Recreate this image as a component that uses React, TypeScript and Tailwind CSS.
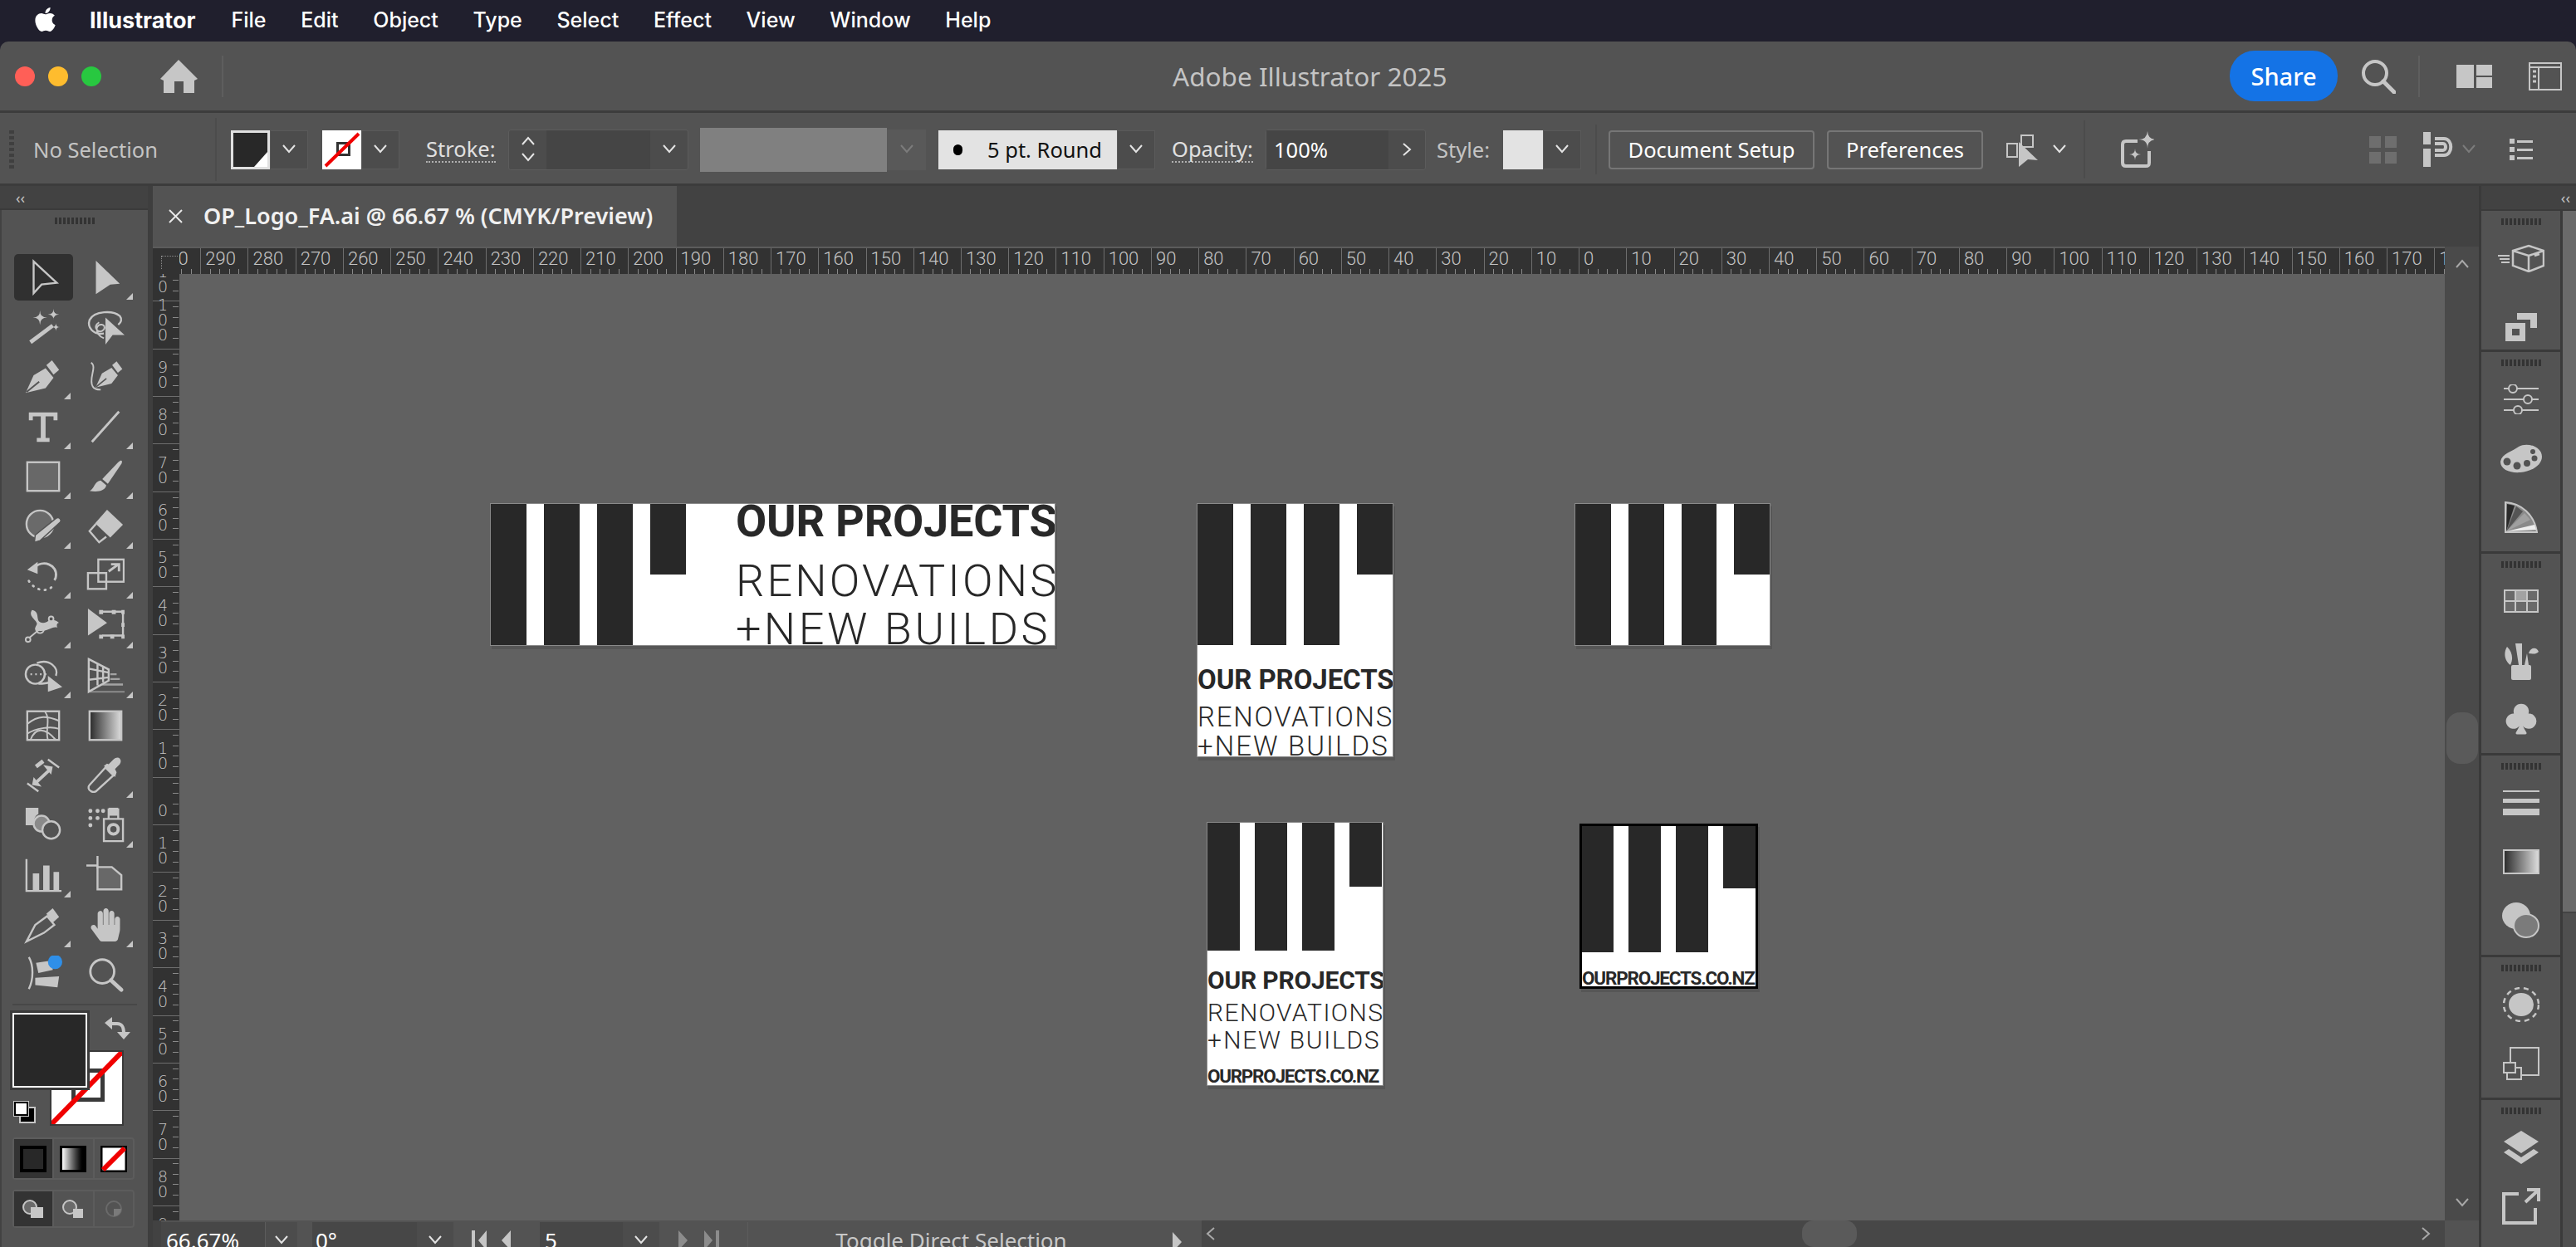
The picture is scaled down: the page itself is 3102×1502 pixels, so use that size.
import type { ReactNode } from 'react'
import { FaApple, FaHandPaper } from 'react-icons/fa'
import { BsSuitClubFill } from 'react-icons/bs'

const C = '#c6c6c6'
const BG = '#535353'

const star = (x: number, y: number, r: number) =>
  `M${x} ${y - r}Q${x} ${y} ${x + r} ${y}Q${x} ${y} ${x} ${y + r}Q${x} ${y} ${x - r} ${y}Q${x} ${y} ${x} ${y - r}Z`

function Ico({ children, size = 48 }: { children: ReactNode; size?: number }) {
  return (
    <svg width={size} height={size} viewBox="0 0 48 48" fill="none" stroke="none">
      {children}
    </svg>
  )
}

const nib = (
  <>
    <path d="M2 44 12 22 27 13 37 25 27 38Z" fill={C} />
    <path d="M28 9 35 3 44 15 37 21Z" fill={C} />
    <path d="M3 43 19 30" stroke={BG} strokeWidth="2" />
  </>
)

const tools: { icon: ReactNode; tri?: boolean }[] = [
  { icon: <path d="M12 4 41 31 22 33 12 44Z" stroke={C} strokeWidth="2.5" /> },
  { icon: <path d="M12 3 42 32 30 33 12 45Z" fill={C} />, tri: true },
  { icon: <><path d="M8 43 36 22" stroke={C} strokeWidth="5" /><path d={star(20, 12, 9)} fill={C} /><path d={star(37, 8, 7)} fill={C} /><path d={star(40, 24, 5)} fill={C} /></> },
  { icon: <><path d="M22 32C8 34 1 24 4 15 10 3 34 3 42 10 45 14 44 18 40 21" stroke={C} strokeWidth="2.5" /><path d="M16 18C6 24 16 34 22 27 26 20 14 18 13 26 13 32 17 36 22 38" stroke={C} strokeWidth="2" /><path d="M24 12 48 34 33 34 24 46Z" fill={C} /></> },
  { icon: nib, tri: true },
  { icon: <><g transform="translate(10 2) scale(.8)">{nib}</g><path d="M6 6C14 12 2 26 8 36 10 40 14 40 18 40" stroke={C} strokeWidth="2" /></> },
  { icon: <path d="M6 6H42V16H37V11H27V38H32V43H16V38H21V11H11V16H6Z" fill={C} />, tri: true },
  { icon: <path d="M7 43 41 5" stroke={C} strokeWidth="3" />, tri: true },
  { icon: <rect x="4" y="6" width="40" height="36" fill="#686868" stroke={C} strokeWidth="2.5" />, tri: true },
  { icon: <><path d="M4 42C10 40 10 30 18 29L25 35C24 42 14 44 4 42Z" fill={C} /><path d="M20 27 40 6C44 2 46 4 44 8L27 33Z" fill={C} /></>, tri: true },
  { icon: <><circle cx="20" cy="21" r="17" fill="#6a6a6a" stroke={C} strokeWidth="2.5" /><path d="M14 35 40 14C44 11 48 16 45 19L20 42 13 44Z" fill={C} stroke={BG} strokeWidth="1.5" /></>, tri: true },
  { icon: <><path d="M26 3 46 22 30 38 11 20Z" fill={C} /><path d="M12 21 4 30 16 44 25 37" stroke={C} strokeWidth="2.5" /></>, tri: true },
  { icon: <><path d="M12 14C24 2 42 10 40 24 40 26 39 28 38 29" stroke={C} strokeWidth="3" /><path d="M4 16 17 6 17 21Z" fill={C} /><path d="M6 30C14 43 32 46 38 33" stroke={C} strokeWidth="3" strokeDasharray="1 7" strokeLinecap="round" /></>, tri: true },
  { icon: <><rect x="15" y="3" width="32" height="28" stroke={C} strokeWidth="2.5" /><rect x="2" y="20" width="23" height="20" stroke={C} strokeWidth="2.5" /><path d="M28 18 39 10M31 9H41V18" stroke={C} strokeWidth="3" /></>, tri: true },
  { icon: <><path d="M10 4C22 6 12 20 24 20 32 20 34 12 44 20 42 20 40 22 42 26 34 24 30 32 18 30 12 30 14 26 16 22 18 18 4 12 10 4Z" fill={C} /><path d="M4 41 34 16" stroke={C} strokeWidth="2" /><circle cx="5" cy="41" r="3" fill={BG} stroke={C} strokeWidth="2" /><circle cx="34" cy="15" r="3" fill={BG} stroke={C} strokeWidth="2" /><circle cx="20" cy="28" r="5" stroke={C} strokeWidth="2" /></>, tri: true },
  { icon: <><path d="M2 2 26 20 2 36Z" fill={C} /><path d="M20 6H46V36H20" stroke={C} strokeWidth="2.5" /><path d="M16 4h5v5h-5zM32 4h5v5h-5zM44 4h4v5h-4zM44 20h4v5h-4zM44 35h4v5h-4zM30 35h5v5h-5zM16 35h5v5h-5z" fill={C} /></>, tri: true },
  { icon: <><ellipse cx="14" cy="22" rx="12" ry="12" stroke={C} strokeWidth="2.5" /><path d="M16 8C32 2 44 14 40 24M18 34C24 34 28 34 32 32" stroke={C} strokeWidth="2.5" /><path d="M8 22h2M14 22h2M20 22h2M26 22h2" stroke={C} strokeWidth="2.5" /><path d="M30 24 48 38 30 44Z" fill={C} /></>, tri: true },
  { icon: <><path d="M3 3 28 16V30L3 44ZM3 15 28 20M3 29 28 26M14 8V36M21 12V32" stroke={C} strokeWidth="2.5" /><path d="M30 22H38M30 28H42M20 35H46" stroke={C} strokeWidth="2.5" opacity=".7" /><path d="M4 44H48" stroke={C} strokeWidth="2" opacity=".5" /></>, tri: true },
  { icon: <><rect x="4" y="6" width="40" height="36" stroke={C} strokeWidth="2.5" /><path d="M4 22C18 10 30 12 44 18M8 42C14 26 26 26 40 42M26 6C34 16 26 30 30 42M4 34C14 28 32 24 44 28" stroke={C} strokeWidth="2" /></> },
  { icon: <rect x="4" y="6" width="40" height="36" fill="url(#gr)" stroke={C} strokeWidth="2.5" /> },
  { icon: <><path d="M4 34 18 44M30 4 44 14" stroke={C} strokeWidth="2.5" /><path d="M15 33 32 17" stroke={C} strokeWidth="4" /><path d="M10 36 22 38 12 26ZM36 13 24 11 34 23Z" fill={C} /><path d="M15 13 24 6" stroke={C} strokeWidth="5" /></> },
  { icon: <><path d="M6 44C2 42 2 38 4 36L24 14 34 24 12 44C10 45 8 45 6 44Z" stroke={C} strokeWidth="2.5" /><path d="M22 12 36 26 38 20 36 16 42 10C46 4 40 -2 34 4L28 10 26 9Z" fill={C} /></>, tri: true },
  { icon: <><path d="M2 2H18V10C14 12 12 16 12 24H2Z" fill={C} /><circle cx="22" cy="22" r="10" fill="#8a8a8a" stroke={C} strokeWidth="2.5" /><circle cx="34" cy="30" r="11" fill={BG} stroke={C} strokeWidth="2.5" /></> },
  { icon: <><path d="M5 6h.1M14 6h.1M21 6h.1M5 15h.1M5 24h.1M14 15h.1" stroke={C} strokeWidth="5" strokeLinecap="round" /><path d="M22 16H46V44H22ZM28 4H40V16H28Z" stroke={C} strokeWidth="2.5" /><rect x="28" y="2" width="12" height="10" fill={C} /><ellipse cx="34" cy="29" rx="6" ry="6" stroke={C} strokeWidth="4" /></>, tri: true },
  { icon: <><path d="M3 4V44H47" stroke={C} strokeWidth="2.5" /><path d="M11 44V22H19V44ZM24 44V12H32V44ZM37 44V20H44V44Z" fill={C} /></>, tri: true },
  { icon: <><path d="M14 0V16M0 12H14" stroke={C} strokeWidth="2.5" /><path d="M14 14H32L44 24V42H14Z" fill="#686868" stroke={C} strokeWidth="2.5" /></> },
  { icon: <><path d="M3 45 14 24 29 13 38 24 25 34Z" stroke={C} strokeWidth="2.5" /><path d="M28 10 36 3 44 14 36 21Z" fill={C} /></>, tri: true },
  { icon: <div />, tri: true },
  { icon: <><path d="M6 2C12 12 12 30 6 42" stroke={C} strokeWidth="2.5" /><path d="M15 9 36 6 36 18 18 22ZM14 28 44 26 42 40 14 37Z" fill={C} /><ellipse cx="39" cy="8" rx="9" ry="9" fill="#2f8fe8" /></> },
  { icon: <><circle cx="20" cy="20" r="15" stroke={C} strokeWidth="3" /><path d="M31 31 44 43" stroke={C} strokeWidth="5" strokeLinecap="round" /></> },
]

function Grip({ n = 10, className = '' }: { n?: number; className?: string }) {
  return (
    <div className={`flex gap-[2px] ${className}`}>
      {Array.from({ length: n }).map((_, i) => (
        <span key={i} className="block w-[3px] h-[8px] bg-[#333333]" />
      ))}
    </div>
  )
}

function Chev({ dir = 'down', className = 'text-[#e4e4e4]' }: { dir?: 'down' | 'up' | 'right' | 'left'; className?: string }) {
  const d = { down: 'M2 3 9 11 16 3', up: 'M2 11 9 3 16 11', right: 'M5 1 13 8 5 15', left: 'M13 1 5 8 13 15' }[dir]
  return (
    <svg width="18" height="16" viewBox="0 0 18 16" fill="none" stroke="currentColor" strokeWidth="2" className={className}>
      <path d={d} />
    </svg>
  )
}

function ChevBox({ w = 'w-[46px]', dim = false, children }: { w?: string; dim?: boolean; children?: ReactNode }) {
  return (
    <div className={`${w} h-full flex items-center justify-center bg-[#4c4c4c] border border-[#5a5a5a]`}>
      {children ?? <Chev className={dim ? 'text-[#777777]' : 'text-[#e4e4e4]'} />}
    </div>
  )
}

function Ruler() {
  const vals = [300, 290, 280, 270, 260, 250, 240, 230, 220, 210, 200, 190, 180, 170, 160, 150, 140, 130, 120, 110, 100, 90, 80, 70, 60, 50, 40, 30, 20, 10, 0, 10, 20, 30, 40, 50, 60, 70, 80, 90, 100, 110, 120, 130, 140, 150, 160, 170, 180]
  return (
    <div className="h-[33px] flex bg-[#323232] border-t-[2px] border-[#5c5c5c] overflow-hidden">
      <div className="w-[32px] shrink-0 h-full z-10 bg-[#323232] flex items-end justify-end pb-[6px] pr-[2px]">
        <div className="w-[20px] h-[16px] border-l border-t border-dotted border-[#8c8c8c]" />
      </div>
      <div className="flex ml-[-32px] shrink-0">
        {vals.map((v, i) => (
          <div key={i} className="w-[57.24px] shrink-0 h-full border-l border-[#6e6e6e] flex flex-col justify-between">
            <div className="pl-[5px] pt-[2px] text-[22px] leading-[22px] font-light text-[#c4c4c4] font-['Roboto',sans-serif]">{v}</div>
            <div className="flex h-[6px] w-full">
              <span className="flex-1" />
              <span className="flex-1 border-l border-[#8a8a8a]" />
              <span className="flex-1 border-l border-[#8a8a8a]" />
              <span className="flex-1 border-l border-[#8a8a8a]" />
              <span className="flex-1 border-l border-[#8a8a8a]" />
            </div>
          </div>
        ))}
      </div>
    </div>
  )
}

function VRuler() {
  const vals = [110, 100, 90, 80, 70, 60, 50, 40, 30, 20, 10, 0, 10, 20, 30, 40, 50, 60, 70, 80, 90]
  return (
    <div className="w-[32px] shrink-0 bg-[#323232] overflow-hidden h-full">
      <div className="mt-[-25px]">
        {vals.map((v, i) => (
          <div key={i} className="h-[57.35px] border-t border-[#6e6e6e] flex justify-between">
            <div className="flex-1 flex flex-col justify-end items-center pb-[8px] text-[19px] leading-[18px] text-[#c4c4c4] font-['DejaVu_Sans',sans-serif] font-extralight">
              {String(v).split('').map((d, k) => (
                <span key={k} className="block">{d}</span>
              ))}
            </div>
            <div className="w-[7px] flex flex-col justify-around pb-[6px] mr-[1px]">
              <span className="block h-[1px] bg-[#8a8a8a]" />
              <span className="block h-[1px] bg-[#8a8a8a]" />
              <span className="block h-[1px] bg-[#8a8a8a]" />
              <span className="block h-[1px] bg-[#8a8a8a]" />
            </div>
          </div>
        ))}
      </div>
    </div>
  )
}

const bold = "font-['Roboto',sans-serif] font-bold text-[#282828] whitespace-nowrap"
const light = "font-['Roboto',sans-serif] font-light text-[#282828] whitespace-nowrap"
const bar = 'bg-[#282828]'

function Canvas() {
  return (
    <div className="flex-1 relative bg-[#616161] overflow-hidden">
      {/* logo artboards sit at free positions on the canvas */}
      <div className="absolute left-[374px] top-[276px] w-[681px] h-[172px] bg-white flex border border-[#8a8a8a] shadow-[2px_4px_0_#565656] overflow-hidden">
        <div className="flex gap-[21px] h-full w-[295px] shrink-0">
          <div className={`w-[43px] h-full ${bar}`} />
          <div className={`w-[43px] h-full ${bar}`} />
          <div className={`w-[43px] h-full ${bar}`} />
          <div className={`w-[43px] h-[85px] ${bar}`} />
        </div>
        <div className="w-[384px] flex-col flex">
          <div className={`${bold} text-[54px] leading-[40px] tracking-[-0.2px] mt-[1px]`}>OUR PROJECTS</div>
          <div className={`${light} text-[54px] leading-[40px] tracking-[3.15px] mt-[32px]`}>RENOVATIONS</div>
          <div className={`${light} text-[54px] leading-[40px] tracking-[3.6px] mt-[18px]`}><span className="tracking-[-5px]">+ </span>NEW BUILDS</div>
        </div>
      </div>

      <div className="absolute left-[1225px] top-[276px] w-[237px] h-[306px] bg-white flex flex-col border border-[#8a8a8a] shadow-[2px_4px_0_#565656] overflow-hidden">
        <div className="flex gap-[21px] h-[170px] shrink-0">
          <div className={`w-[43px] h-full ${bar}`} />
          <div className={`w-[43px] h-full ${bar}`} />
          <div className={`w-[43px] h-full ${bar}`} />
          <div className={`w-[43px] h-[85px] ${bar}`} />
        </div>
        <div className={`${bold} text-[33px] leading-[24px] tracking-[-0.1px] mt-[30px]`}>OUR PROJECTS</div>
        <div className={`${light} text-[33px] leading-[24px] tracking-[1.75px] mt-[21px]`}>RENOVATIONS</div>
        <div className={`${light} text-[33px] leading-[24px] tracking-[2.1px] mt-[11px]`}><span className="tracking-[-3px]">+ </span>NEW BUILDS</div>
      </div>

      <div className="absolute left-[1680px] top-[276px] w-[236px] h-[172px] bg-white flex gap-[21px] border border-[#8a8a8a] shadow-[2px_4px_0_#565656] overflow-hidden">
        <div className={`w-[43px] h-full ${bar}`} />
        <div className={`w-[43px] h-full ${bar}`} />
        <div className={`w-[43px] h-full ${bar}`} />
        <div className={`w-[43px] h-[85px] ${bar}`} />
      </div>

      <div className="absolute left-[1237px] top-[660px] w-[213px] h-[318px] bg-white flex flex-col border border-[#8a8a8a] shadow-[2px_4px_0_#565656] overflow-hidden">
        <div className="flex gap-[18px] h-[154px] shrink-0">
          <div className={`w-[39px] h-full ${bar}`} />
          <div className={`w-[39px] h-full ${bar}`} />
          <div className={`w-[39px] h-full ${bar}`} />
          <div className={`w-[39px] h-[77px] ${bar}`} />
        </div>
        <div className={`${bold} text-[30px] leading-[22px] tracking-[-0.2px] mt-[25px]`}>OUR PROJECTS</div>
        <div className={`${light} text-[30px] leading-[22px] tracking-[1.4px] mt-[17px]`}>RENOVATIONS</div>
        <div className={`${light} text-[30px] leading-[22px] tracking-[1.7px] mt-[11px]`}><span className="tracking-[-2.5px]">+ </span>NEW BUILDS</div>
        <div className={`${bold} text-[22.5px] leading-[18px] tracking-[-1.3px] mt-[23px]`}>OURPROJECTS.CO.NZ</div>
      </div>

      <div className="absolute left-[1686px] top-[662px] w-[215px] h-[199px] bg-white flex flex-col border-[3px] border-black shadow-[2px_4px_0_#565656] overflow-hidden">
        <div className="flex gap-[18.5px] h-[152px] shrink-0 ml-[-1px]">
          <div className={`w-[39px] h-full ${bar}`} />
          <div className={`w-[39px] h-full ${bar}`} />
          <div className={`w-[39px] h-full ${bar}`} />
          <div className={`w-[39px] h-[75px] ${bar}`} />
        </div>
        <div className={`${bold} text-[22.5px] leading-[18px] tracking-[-1.2px] mt-[22px]`}>OURPROJECTS.CO.NZ</div>
      </div>
    </div>
  )
}

function Tri() {
  return <span className="absolute right-[5px] bottom-[3px] w-0 h-0 border-l-[8px] border-l-transparent border-b-[8px] border-b-[#c6c6c6]" />
}

function LeftPanel() {
  return (
    <div className="w-[184px] shrink-0 flex flex-col bg-[#424242] border-r-[6px] border-[#3e3e3e] h-full">
      <div className="h-[29px] shrink-0 flex items-center pl-[19px] text-[#c4c4c4] text-[18px] leading-none font-['Noto_Sans',sans-serif] border-b-[2px] border-[#3a3a3a]">‹‹</div>
      <div className="flex-1 bg-[#535353] ml-[2px] flex flex-col">
        <Grip className="justify-center mt-[9px] ml-[-1px] h-[8px]" />
        <div className="grid grid-cols-[75.5px_75.5px] auto-rows-[60px] ml-[12px] mt-[34px]">
          {tools.map((t, i) => (
            <div key={i} className={`relative flex items-center justify-center ${i === 0 ? 'rounded-[5px] bg-[#303030] ml-[3px] mr-[2px] my-[2px]' : ''}`}>
              {i === 27 ? <FaHandPaper size={40} color={C} /> : <Ico size={46}>{t.icon}</Ico>}
              {t.tri && <Tri />}
            </div>
          ))}
        </div>
        <div className="mx-[13px] mt-[5px] h-[2px] bg-[#474747]" />
        <div className="relative h-[150px] mt-[9px] ml-[13px]">
          <div className="absolute left-[45px] top-[45px] w-[89px] h-[91px] bg-white border-[2px] border-[#3a3a3a] overflow-hidden">
            <div className="absolute left-[24px] top-[20px] w-[40px] h-[40px] border-[5px] border-[#3a3a3a]" />
            <svg className="absolute inset-0" width="85" height="87" viewBox="0 0 85 87"><path d="M0 87 85 0" stroke="#f00000" strokeWidth="6" /></svg>
          </div>
          <div className="absolute left-0 top-0 w-[90px] h-[90px] bg-[#282828] border-[2px] border-white outline-[3px] outline-[#3a3a3a]" />
          <svg className="absolute left-[110px] top-[3px]" width="32" height="30" viewBox="0 0 32 30" fill="none">
            <path d="M5 10H16C22 10 24 14 24 22" stroke={C} strokeWidth="4" />
            <path d="M1 9 10 2V17ZM24 29 16 20H32Z" fill={C} />
          </svg>
          <div className="absolute left-0 top-[105px] w-[30px] h-[30px]">
            <div className="absolute left-[8px] top-[8px] w-[20px] h-[20px] bg-black border-[2px] border-[#c6c6c6]" />
            <div className="absolute left-[2px] top-[2px] w-[17px] h-[17px] bg-white border-[2px] border-black outline-[1px] outline-[#c6c6c6]" />
          </div>
        </div>
        <div className="ml-[13px] w-[147px] h-[51px] flex border-[2px] border-[#5c5c5c] rounded-[4px]">
          <div className="flex-1 bg-[#333333] flex items-center justify-center"><div className="w-[32px] h-[32px] bg-[#282828] border-[4px] border-black" /></div>
          <div className="flex-1 border-l-[2px] border-[#5c5c5c] flex items-center justify-center"><div className="w-[32px] h-[32px] bg-gradient-to-r from-white to-black border-[3px] border-black" /></div>
          <div className="flex-1 border-l-[2px] border-[#5c5c5c] flex items-center justify-center">
            <svg width="32" height="32" viewBox="0 0 32 32"><rect width="32" height="32" fill="#fff" stroke="#000" strokeWidth="5" /><path d="M3 29 29 3" stroke="#f00000" strokeWidth="6" /></svg>
          </div>
        </div>
        <div className="ml-[13px] mt-[12px] w-[147px] h-[46px] flex border-[2px] border-[#5c5c5c] rounded-[4px]">
          <div className="flex-1 bg-[#333333] flex items-center justify-center">
            <svg width="28" height="24" viewBox="0 0 28 24" fill="none"><circle cx="10" cy="10" r="8" stroke={C} strokeWidth="2" fill="#6a6a6a" /><rect x="11" y="10" width="15" height="13" fill={C} /></svg>
          </div>
          <div className="flex-1 border-l-[2px] border-[#5c5c5c] flex items-center justify-center">
            <svg width="28" height="24" viewBox="0 0 28 24" fill="none"><circle cx="10" cy="10" r="8" stroke={C} strokeWidth="2" fill="#6a6a6a" /><rect x="14" y="12" width="12" height="11" fill={C} /></svg>
          </div>
          <div className="flex-1 border-l-[2px] border-[#5c5c5c] flex items-center justify-center">
            <svg width="24" height="22" viewBox="0 0 24 22" fill="none"><circle cx="12" cy="11" r="9" stroke="#6a6a6a" strokeWidth="2" /><path d="M12 11H21C21 16 17 20 12 20Z" fill="#7a7a7a" /></svg>
          </div>
        </div>
      </div>
    </div>
  )
}

function RightSection({ h, items, last }: { h: string; items: ReactNode[]; last?: boolean }) {
  return (
    <div className={`${h} shrink-0 flex flex-col items-center pt-[9px] ${last ? '' : 'border-b-[3px] border-[#3a3a3a]'}`}>
      <Grip />
      <div className="mt-[4px] flex flex-col items-center w-full">
        {items.map((x, i) => (
          <div key={i} className="h-[71px] w-full flex items-center justify-center">{x}</div>
        ))}
      </div>
    </div>
  )
}

function RightPanel() {
  const s = C
  return (
    <div className="w-[118px] shrink-0 flex flex-col h-full bg-[#3a3a3a] pl-[3px]">
      <div className="h-[30px] shrink-0 bg-[#424242] flex items-center justify-end pr-[8px] text-[#c4c4c4] text-[18px] leading-none border-b-[2px] border-[#3a3a3a] font-['Noto_Sans',sans-serif]">‹‹</div>
      <div className="flex-1 flex">
        <div className="w-[95px] shrink-0 bg-[#535353] flex flex-col">
          <RightSection h="h-[170px]" items={[
            <svg key="a" width="56" height="34" viewBox="0 0 56 34" fill="none"><path d="M0 14H14M2 18H14M4 22H14" stroke={s} strokeWidth="2" /><path d="M18 8 37 2 55 8V26L37 33 18 26ZM18 8 37 14 55 8M37 14V33M44 14 50 12" stroke={s} strokeWidth="2.5" /></svg>,
            <div key="b" className="mt-[24px]"><svg width="38" height="34" viewBox="0 0 38 34"><path d="M14 0H38V18H30V8H14Z" fill={s} /><path d="M0 12H24V34H0ZM8 19V27H17V19Z" fill={s} fillRule="evenodd" /></svg></div>,
          ]} />
          <RightSection h="h-[243px]" items={[
            <svg key="a" width="42" height="36" viewBox="0 0 42 36" fill="none" stroke={s} strokeWidth="2"><path d="M0 5H42M0 18H42M0 31H42" /><circle cx="11" cy="5" r="5" fill={BG} /><circle cx="29" cy="18" r="5" fill={BG} /><circle cx="17" cy="31" r="5" fill={BG} /></svg>,
            <svg key="b" width="50" height="36" viewBox="0 0 50 36"><path d="M0 22C2 12 14 10 22 4 32 -2 50 4 50 16 50 26 38 34 24 35 12 36 0 32 0 22Z" fill={s} /><circle cx="8" cy="22" r="4.5" fill={BG} /><circle cx="20" cy="27" r="4.5" fill={BG} /><circle cx="32" cy="24" r="4" fill={BG} /><circle cx="41" cy="18" r="3.5" fill={BG} /><circle cx="39" cy="10" r="3" fill={BG} /></svg>,
            <svg key="c" width="40" height="38" viewBox="0 0 40 38"><path d="M1 1C20 2 36 16 39 37H1Z" fill="#8a8a8a" stroke={s} strokeWidth="2" /><path d="M2 36 3 3 12 5Z" fill="#2a2a2a" /><path d="M2 36 14 6 22 12Z" fill="#555" /><path d="M2 36 24 14 31 22Z" fill="#a0a0a0" /><path d="M2 36 38 34 36 28Z" fill="#eee" /></svg>,
          ]} />
          <RightSection h="h-[243px]" items={[
            <svg key="a" width="42" height="28" viewBox="0 0 42 28"><rect x="1" y="1" width="40" height="26" fill="#6a6a6a" stroke={s} strokeWidth="2" /><rect x="15" y="2" width="13" height="11" fill="#a2a2a2" /><path d="M14 1V27M28 1V27M1 14H41" stroke={s} strokeWidth="2" /></svg>,
            <svg key="b" width="42" height="48" viewBox="0 0 42 48"><rect x="9" y="30" width="24" height="18" rx="2" fill={s} /><path d="M18 30 14 4H22L22 30ZM25 30 28 16 30 30Z" fill={s} /><path d="M8 30C0 24 0 14 4 8 10 14 12 22 8 30ZM30 16C32 8 40 8 42 14 38 18 34 16 30 16Z" fill={s} /></svg>,
            <BsSuitClubFill key="c" size={42} color={s} />,
          ]} />
          <RightSection h="h-[243px]" items={[
            <svg key="a" width="44" height="30" viewBox="0 0 44 30" fill={s}><rect width="44" height="2" /><rect y="10" width="44" height="5" /><rect y="22" width="44" height="8" /></svg>,
            <svg key="b" width="44" height="30" viewBox="0 0 44 30"><rect x="1" y="1" width="42" height="28" fill="url(#gr)" stroke={s} strokeWidth="2" /></svg>,
            <svg key="c" width="46" height="44" viewBox="0 0 46 44"><ellipse cx="17" cy="16" rx="17" ry="16" fill={s} /><ellipse cx="29" cy="28" rx="15" ry="14" fill="#7b7b7b" stroke={s} strokeWidth="2" /></svg>,
          ]} />
          <RightSection h="h-[172px]" items={[
            <svg key="a" width="44" height="42" viewBox="0 0 44 42"><ellipse cx="22" cy="21" rx="21" ry="20" fill="none" stroke={s} strokeWidth="2.5" strokeDasharray="6 5" /><ellipse cx="22" cy="21" rx="15" ry="14" fill={s} /></svg>,
            <svg key="b" width="44" height="40" viewBox="0 0 44 40" fill="none" stroke={s} strokeWidth="2"><rect x="9" y="1" width="34" height="33" /><rect x="5" y="25" width="17" height="14" fill={BG} /><rect x="1" y="19" width="14" height="12" fill={BG} /></svg>,
          ]} />
          <RightSection h="flex-1" last items={[
            <svg key="a" width="42" height="40" viewBox="0 0 42 40" fill={s}><path d="M21 0 42 13 21 27 0 13Z" /><path d="M6 22 21 32 36 22 42 26 21 40 0 26Z" /></svg>,
            <svg key="b" width="46" height="44" viewBox="0 0 46 44" fill="none" stroke={s} strokeWidth="4"><path d="M20 7H2V42H40V24" /><path d="M28 17 43 3M30 2H44V16" /></svg>,
          ]} />
        </div>
        <div className="flex-1 ml-[3px] flex flex-col">
          <div className="h-[846px] bg-[#6a6a6a] border-b-[2px] border-[#444444]" />
          <div className="flex-1 bg-[#4f4f4f]" />
        </div>
      </div>
    </div>
  )
}

function StatusBar() {
  const f = "font-['Noto_Sans',sans-serif] text-[26px] leading-[44px] whitespace-nowrap"
  return (
    <div className="h-[32px] shrink-0 flex bg-[#535353] overflow-hidden">
      <div className="w-[10px] bg-[#424242]" />
      <div className="flex h-full w-[1253px] pt-[2px]">
        <div className={`w-[126px] bg-[#474747] border-r border-[#5c5c5c] pl-[6px] text-white ${f}`}>66.67%</div>
        <div className="w-[38px] bg-[#4c4c4c] flex justify-center pt-[14px]"><Chev /></div>
        <div className={`w-[126px] ml-[18px] bg-[#474747] pl-[4px] text-white ${f}`}>0°</div>
        <div className="w-[44px] bg-[#4c4c4c] flex justify-center pt-[14px]"><Chev /></div>
        <div className="w-[104px] flex items-start gap-[12px] pl-[22px] pt-[10px]">
          <svg width="22" height="24" viewBox="0 0 22 24" fill={C}><rect width="4" height="24" /><path d="M18 0V24L8 12Z" /></svg>
          <svg width="14" height="24" viewBox="0 0 14 24" fill={C}><path d="M13 0V24L2 12Z" /></svg>
        </div>
        <div className={`w-[100px] bg-[#474747] pl-[6px] text-white ${f}`}>5</div>
        <div className="w-[44px] bg-[#4c4c4c] flex justify-center pt-[14px]"><Chev /></div>
        <div className="w-[106px] flex items-start gap-[14px] pl-[22px] pt-[10px] opacity-50">
          <svg width="14" height="24" viewBox="0 0 14 24" fill={C}><path d="M1 0V24L12 12Z" /></svg>
          <svg width="22" height="24" viewBox="0 0 22 24" fill={C}><path d="M4 0V24L14 12Z" /><rect x="18" width="4" height="24" /></svg>
        </div>
        <div className={`w-[498px] border-l border-[#5c5c5c] pr-[8px] text-center text-[#c8c8c8] ${f}`}>Toggle Direct Selection</div>
        <div className="w-[47px] flex pt-[12px] pl-[13px]">
          <svg width="14" height="24" viewBox="0 0 14 24" fill={C}><path d="M1 0V24L12 12Z" /></svg>
        </div>
      </div>
      <div className="flex-1 bg-[#474747] flex items-center relative">
        <div className="ml-[2px]"><Chev dir="left" className="text-[#a8a8a8]" /></div>
        <div className="absolute left-[723px] top-[0px] w-[66px] h-[32px] rounded-[14px] bg-[#5a5a5a]" />
        <div className="ml-auto mr-[14px]"><Chev dir="right" className="text-[#a8a8a8]" /></div>
      </div>
      <div className="w-[41px] bg-[#535353]" />
    </div>
  )
}

export default function App() {
  const ui = "font-['Noto_Sans',sans-serif]"
  return (
    <div className="w-[3102px] h-[1502px] overflow-hidden bg-[#201f2d] flex flex-col">
      <svg width="0" height="0" className="absolute">
        <defs>
          <linearGradient id="gr"><stop offset="0" stopColor="#2a2a2a" /><stop offset="1" stopColor="#dddddd" /></linearGradient>
        </defs>
      </svg>

      {/* mac menu bar */}
      <div className="h-[50px] shrink-0 flex items-center bg-[#201f2d] pl-[38px] text-white text-[25px] font-['Inter',sans-serif]">
        <FaApple size={33} color="#fff" className="mt-[-4px]" />
        <div className="ml-[37px] font-bold text-[27px]">Illustrator</div>
        <div className="flex gap-[41.7px] ml-[43px] font-medium">
          {['File', 'Edit', 'Object', 'Type', 'Select', 'Effect', 'View', 'Window', 'Help'].map(m => (
            <span key={m}>{m}</span>
          ))}
        </div>
      </div>

      <div className="flex-1 flex flex-col min-h-0 rounded-t-[10px] overflow-hidden bg-[#535353]">
        {/* title bar */}
        <div className="h-[86px] shrink-0 flex items-center border-b-[3px] border-[#3c3c3c]">
          <div className="flex gap-[16px] ml-[18px]">
            <span className="block w-[24px] h-[24px] rounded-full bg-[#ff5f57]" />
            <span className="block w-[24px] h-[24px] rounded-full bg-[#febc2e]" />
            <span className="block w-[24px] h-[24px] rounded-full bg-[#28c840]" />
          </div>
          <svg className="ml-[71px]" width="45" height="40" viewBox="0 0 45 40" fill={C}>
            <path d="M22 0 45 23 41 25V40H28V26H17V40H4V25L0 23Z" />
          </svg>
          <div className="ml-[29px] w-[2px] h-[50px] bg-[#5e5e5e]" />
          <div className={`ml-[1143px] text-[#c4c4c4] text-[31.5px] leading-none ${ui}`}>Adobe Illustrator 2025</div>
          <div className={`ml-[auto] w-[130px] h-[61px] rounded-[30px] bg-[#1473e6] text-white text-[29px] font-medium flex items-center justify-center ${ui}`}>Share</div>
          <svg className="ml-[28px]" width="42" height="42" viewBox="0 0 42 42" fill="none" stroke={C} strokeWidth="4"><circle cx="17" cy="17" r="14" /><path d="M27 27 40 40" strokeLinecap="round" strokeWidth="5" /></svg>
          <div className="ml-[27px] w-[2px] h-[50px] bg-[#5e5e5e]" />
          <svg className="ml-[44px]" width="43" height="28" viewBox="0 0 43 28" fill={C}><rect width="21" height="28" /><rect x="24" width="19" height="13" /><rect x="24" y="15" width="19" height="13" /></svg>
          <svg className="ml-[44px] mr-[17px]" width="40" height="34" viewBox="0 0 40 34" fill="none" stroke={C} strokeWidth="2"><rect x="1" y="1" width="38" height="32" /><path d="M1 6H39M12 6V33" /><path d="M5 11h4M5 17h4M5 23h4" strokeWidth="3" /></svg>
        </div>

        {/* control bar */}
        <div className={`h-[88px] pt-[3px] shrink-0 flex items-center text-[25.5px] border-b-[3px] border-[#3c3c3c] ${ui}`}>
          <div className="w-[261px] h-[76px] shrink-0 flex items-center border-r-[2px] border-[#4c4c4c] pl-[11px]">
            <div className="grid grid-cols-1 gap-[3px]">
              {Array.from({ length: 7 }).map((_, i) => <span key={i} className="block w-[6px] h-[4px] bg-[#3f3f3f]" />)}
            </div>
            <span className="ml-[23px] text-[#c4c4c4] whitespace-nowrap">No Selection</span>
          </div>
          <div className="ml-[17px] w-[93px] h-[47px] flex shrink-0">
            <div className="w-[47px] h-full bg-[#282828] border-[3px] border-[#e0e0e0] relative overflow-hidden">
              <span className="absolute right-0 bottom-0 w-0 h-0 border-l-[16px] border-l-transparent border-b-[18px] border-b-white" />
            </div>
            <ChevBox />
          </div>
          <div className="ml-[17px] w-[93px] h-[47px] flex shrink-0">
            <div className="w-[47px] h-full bg-white relative">
              <span className="absolute left-[17px] top-[14px] w-[17px] h-[17px] border-[3px] border-[#333333]" />
              <svg className="absolute inset-0" width="47" height="47" viewBox="0 0 47 47"><path d="M4 43 44 4" stroke="#f00000" strokeWidth="4" /></svg>
            </div>
            <ChevBox />
          </div>
          <div className="ml-[32px] w-[84px] shrink-0 relative text-[#e0e0e0] leading-[30px] border-b-[2px] border-dotted border-[#b0b0b0] whitespace-nowrap">Stroke:</div>
          <div className="ml-[15px] w-[217px] h-[49px] flex shrink-0 border border-[#5c5c5c] rounded-[3px] bg-[#4c4c4c]">
            <div className="w-[45px] flex flex-col items-center justify-center gap-[3px]"><Chev dir="up" /><Chev /></div>
            <div className="flex-1 bg-[#454545]" />
            <div className="w-[45px] flex items-center justify-center"><Chev /></div>
          </div>
          <div className="ml-[14px] w-[225px] h-[53px] bg-[#808080] shrink-0" />
          <div className="w-[47px] h-[49px] shrink-0 bg-[#595959] flex items-center justify-center"><Chev className="text-[#7c7c7c]" /></div>
          <div className="ml-[15px] w-[262px] h-[47px] shrink-0 flex">
            <div className="w-[215px] h-full bg-[#e3e3e3] flex items-center text-[#111111] whitespace-nowrap">
              <span className="block w-[11px] h-[13px] rounded-full bg-black ml-[18px]" />
              <span className="ml-[30px]">5 pt. Round</span>
            </div>
            <ChevBox />
          </div>
          <div className="ml-[19px] w-[98px] shrink-0 text-[#e0e0e0] leading-[30px] border-b-[2px] border-dotted border-[#b0b0b0]">Opacity:</div>
          <div className="ml-[15px] w-[193px] h-[49px] shrink-0 flex border border-[#5c5c5c] rounded-[3px] bg-[#4c4c4c]">
            <div className="w-[147px] bg-[#454545] pl-[9px] flex items-center text-white">100%</div>
            <div className="flex-1 flex items-center justify-center"><Chev dir="right" /></div>
          </div>
          <div className="ml-[13px] w-[65px] shrink-0 text-[#c4c4c4]">Style:</div>
          <div className="ml-[15px] w-[95px] h-[47px] shrink-0 flex">
            <div className="w-[48px] h-full bg-[#e3e3e3]" />
            <ChevBox />
          </div>
          <div className="ml-[16px] w-[2px] h-[60px] bg-[#4c4c4c]" />
          <div className="ml-[14px] w-[248px] h-[47px] shrink-0 rounded-[4px] border-[2px] border-[#767676] flex items-center justify-center text-white whitespace-nowrap">Document Setup</div>
          <div className="ml-[15px] w-[188px] h-[47px] shrink-0 rounded-[4px] border-[2px] border-[#767676] flex items-center justify-center text-white">Preferences</div>
          <svg className="ml-[26px] shrink-0" width="42" height="42" viewBox="0 0 42 42" fill="none" stroke={C} strokeWidth="2"><rect x="20" y="4" width="14" height="14" /><rect x="3" y="14" width="12" height="16" /><path d="M17 12 40 34 28 33 17 42Z" fill={C} stroke="none" /></svg>
          <div className="ml-[15px] shrink-0"><Chev /></div>
          <div className="ml-[20px] w-[2px] h-[70px] bg-[#4c4c4c]" />
          <svg className="ml-[43px] shrink-0" width="40" height="44" viewBox="0 0 40 44" fill="none"><path d="M20 12H6C3 12 2 14 2 16V38C2 41 4 42 6 42H30C33 42 34 41 34 38V24" stroke={C} strokeWidth="4" /><path d={star(32, 10, 11)} fill={C} /><path d={star(17, 28, 7)} fill={C} /></svg>
          <svg className="ml-[256px] shrink-0" width="38" height="36" viewBox="0 0 38 36" fill="#6e6e6e"><rect x="3" y="2" width="14" height="14" /><rect x="22" y="2" width="14" height="14" /><rect x="3" y="21" width="14" height="14" /><rect x="22" y="21" width="14" height="14" /></svg>
          <svg className="ml-[30px] shrink-0" width="36" height="42" viewBox="0 0 36 42" fill="none"><path d="M0 0H9V15H0ZM0 20H9V42H0Z" fill={C} /><path d="M14 8H25C36 8 36 28 25 28H14M14 14H24C28 14 28 22 24 22H14" stroke={C} strokeWidth="4" /></svg>
          <div className="ml-[10px] shrink-0"><Chev className="text-[#7c7c7c]" /></div>
          <svg className="ml-[40px] shrink-0" width="28" height="26" viewBox="0 0 28 26" fill={C}><path d="M0 0h6v6H0zM0 10h6v6H0zM0 20h6v6H0zM9 2h19v3H9zM9 12h19v3H9zM9 22h19v3H9z" /></svg>
        </div>

        {/* main */}
        <div className="flex-1 flex min-h-0">
          <LeftPanel />
          <div className="w-[2801px] shrink-0 flex flex-col min-w-0 h-full">
            <div className="h-[73px] shrink-0 bg-[#424242]">
              <div className={`w-[631px] h-full bg-[#535353] flex items-center pl-[19px] text-[#f0f0f0] text-[27px] font-semibold ${ui}`}>
                <svg width="17" height="17" viewBox="0 0 17 17" stroke="#e8e8e8" strokeWidth="2"><path d="M1 1 16 16M16 1 1 16" /></svg>
                <span className="ml-[25px] whitespace-nowrap">OP_Logo_FA.ai @ 66.67 % (CMYK/Preview)</span>
              </div>
            </div>
            <div className="flex-1 flex min-h-0">
              <div className="w-[2760px] shrink-0 flex flex-col min-h-0">
                <Ruler />
                <div className="flex-1 flex min-h-0">
                  <VRuler />
                  <Canvas />
                </div>
              </div>
              <div className="flex-1 bg-[#4a4a4a] flex flex-col items-center relative">
                <div className="mt-[14px]"><Chev dir="up" className="text-[#a8a8a8]" /></div>
                <div className="absolute left-[2px] top-[561px] w-[38px] h-[62px] rounded-[16px] bg-[#5a5a5a]" />
                <div className="mt-auto mb-[13px]"><Chev className="text-[#a8a8a8]" /></div>
              </div>
            </div>
            <StatusBar />
          </div>
          <RightPanel />
        </div>
      </div>
    </div>
  )
}
